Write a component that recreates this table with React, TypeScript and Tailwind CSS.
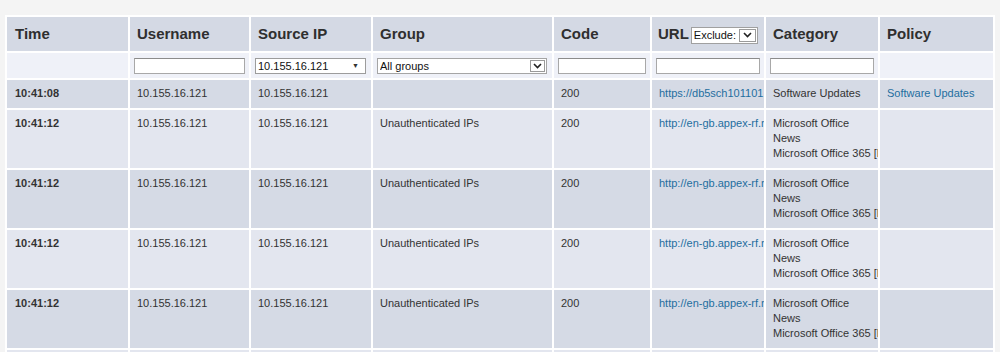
import React from "react"

type Row = {
  time: string
  user: string
  ip: string
  group: string
  code: string
  url: string
  category: string[]
  policy?: string
}

const rows: Row[] = [
  {
    time: "10:41:08",
    user: "10.155.16.121",
    ip: "10.155.16.121",
    group: "",
    code: "200",
    url: "https://db5sch101101.wns.windows.com/",
    category: ["Software Updates"],
    policy: "Software Updates",
  },
  ...Array.from({ length: 5 }, () => ({
    time: "10:41:12",
    user: "10.155.16.121",
    ip: "10.155.16.121",
    group: "Unauthenticated IPs",
    code: "200",
    url: "http://en-gb.appex-rf.msn.com/cgtile/v1/en-GB/News/today.xml",
    category: ["Microsoft Office", "News", "Microsoft Office 365 [Exchange Online]"],
  })),
]

function Chevron() {
  return (
    <svg width="9" height="6" viewBox="0 0 9 6" fill="none">
      <path d="M1 1l3.5 3.5L8 1" stroke="#222" strokeWidth="1.6" />
    </svg>
  )
}

function BoxSelect({ value, width }: { value: string; width: string }) {
  return (
    <div className={`relative inline-flex h-[16px] items-center border border-[#a5a5a5] bg-white align-middle ${width}`}>
      <select className="h-full w-full appearance-none bg-transparent pl-[2px] text-[11px] leading-[14px] text-[#111] outline-none">
        <option>{value}</option>
      </select>
      <span className="pointer-events-none absolute right-[1px] top-[1px] flex h-[12px] w-[15px] items-center justify-center border border-[#9a9a9a] bg-white">
        <Chevron />
      </span>
    </div>
  )
}

const th = "h-[34px] px-[7px] text-left align-middle text-[15px] font-bold text-[#2f2f2f] bg-[#d4d9e4] whitespace-nowrap overflow-hidden"
const filt = "h-[25px] px-[4px] py-0 align-middle bg-[#eff1f8]"
const inputCls = "block h-[16px] w-full border border-[#a8a8a8] border-t-[#8c8c8c] bg-white px-[2px] text-[11px] outline-none"

export default function App() {
  return (
    <div className="min-h-screen bg-[#f4f4f4] pl-[5px] pt-[15px] font-['Liberation_Sans',Arial,sans-serif]">
      <table className="w-[990px] table-fixed border-separate border-spacing-[2px] bg-white">
        <thead>
          <tr>
            <th className={`${th} w-[121px] pl-[8px]`}>Time</th>
            <th className={`${th} w-[119px]`}>Username</th>
            <th className={`${th} w-[120px]`}>Source IP</th>
            <th className={`${th} w-[179px]`}>Group</th>
            <th className={`${th} w-[96px]`}>Code</th>
            <th className={`${th} w-[112px] pl-[6px] pr-0`}>
              <div className="flex items-center gap-[2px] pt-[2px]">
                <span className="-mt-[2px]">URL</span>
                <div className="relative flex h-[17px] w-[67px] items-center border border-[#a0a0a0] bg-white">
                  <span className="pl-[2px] text-[11px] font-normal leading-none text-[#111]">Exclude:</span>
                  <span className="absolute right-[1px] top-[1px] flex h-[13px] w-[17px] items-center justify-center border border-[#9a9a9a] bg-white">
                    <Chevron />
                  </span>
                </div>
              </div>
            </th>
            <th className={`${th} w-[112px]`}>Category</th>
            <th className={`${th} w-[113px]`}>Policy</th>
          </tr>
          <tr>
            <td className={filt}></td>
            <td className={filt}>
              <input className={inputCls} />
            </td>
            <td className={filt}>
              <div className="relative flex h-[16px] w-[111px] items-center border border-[#9c9c9c] bg-white">
                <select className="h-full w-full appearance-none bg-transparent pl-[2px] text-[11px] leading-[14px] text-[#111] outline-none">
                  <option>10.155.16.121</option>
                </select>
                <span className="pointer-events-none absolute right-[6px] top-[3px] text-[7px] leading-none text-[#333]">▼</span>
              </div>
            </td>
            <td className={filt}>
              <BoxSelect value="All groups" width="w-[170px]" />
            </td>
            <td className={filt}>
              <input className={inputCls} />
            </td>
            <td className={filt}>
              <input className={inputCls} />
            </td>
            <td className={filt}>
              <input className={inputCls} />
            </td>
            <td className={filt}></td>
          </tr>
        </thead>
        <tbody>
          {rows.map((r, i) => {
            const bg = i % 2 === 0 ? "bg-[#d5dae5]" : "bg-[#e3e6ef]"
            const td = `${bg} pl-[7px] pr-0 pt-[6px] pb-[7px] align-top text-[11px] leading-[15px] text-[#333] whitespace-nowrap overflow-hidden`
            return (
              <tr key={i}>
                <td className={`${td} pl-[8px] font-bold`}>{r.time}</td>
                <td className={td}>{r.user}</td>
                <td className={td}>{r.ip}</td>
                <td className={td}>{r.group}</td>
                <td className={td}>{r.code}</td>
                <td className={`${td} pl-[6px]`}>
                  <a href="#" className="text-[#1f6e9f]">{r.url}</a>
                </td>
                <td className={`${td} pl-[7px]`}>
                  {r.category.map((c) => (
                    <div key={c}>{c}</div>
                  ))}
                </td>
                <td className={`${td} pl-[6px]`}>
                  {r.policy && <a href="#" className="text-[#1f6e9f]">{r.policy}</a>}
                </td>
              </tr>
            )
          })}
        </tbody>
      </table>
    </div>
  )
}
